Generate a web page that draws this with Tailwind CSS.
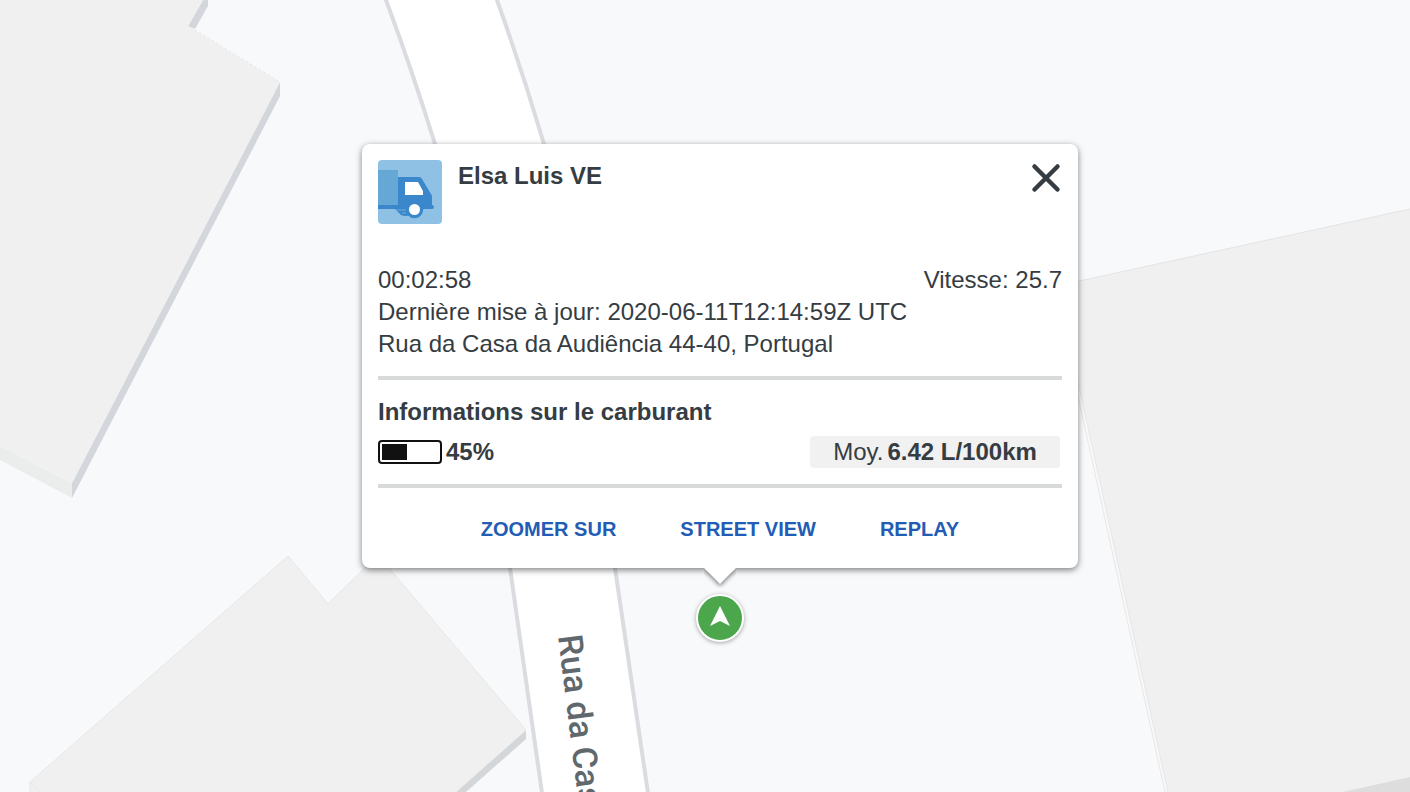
<!DOCTYPE html>
<html lang="fr">
<head>
    <meta charset="UTF-8">
    <meta name="viewport" content="width=device-width, initial-scale=1.0">
    <title>Elsa Luis VE</title>
    <script src="https://cdn.jsdelivr.net/npm/@tailwindcss/browser@4"></script>
    <style>
        body {
            font-family: 'Liberation Sans', Arial, sans-serif;
        }
    </style>
</head>
<body class="relative min-h-screen overflow-hidden bg-[#f8f9fb] text-[#353c42]">

    <!-- Map -->
    <svg class="absolute inset-0 h-full w-full" viewBox="0 0 1410 792" preserveAspectRatio="xMinYMin slice" aria-hidden="true">
        <!-- Road -->
        <path d="M383 -10L386 0Q412 70 435 144Q492 330 510 568L543 800H649L615 568Q596 330 544 144Q522 70 497 0L494 -10Z" fill="#fff" stroke="#dbdce0" stroke-width="4"/>

        <!-- Top left building -->
        <path d="M203 0H208V6L195 29L188 26Z" fill="#d3d6da"/>
        <path d="M280 82V96L72 498V483Z" fill="#d3d6da"/>
        <path d="M0 446L72 483V498L0 460Z" fill="#ebedec"/>
        <path d="M0 0H203L188 26L280 82L72 483L0 446Z" fill="#f0f0f0"/>
        <path d="M195 30L280 82" stroke="#e3e4e5" stroke-dasharray="2 3"/>

        <!-- Bottom left building -->
        <path d="M526 730V739L466 792H456Z" fill="#d4d7da"/>
        <path d="M288 556L328 604L378 555L526 730L456 792H30V782Z" fill="#f0f0f0"/>
        <path d="M30 792V782L288 556L328 604L378 555L526 730M30 782L39 792" fill="none" stroke="#e6e7e7"/>

        <!-- Right building -->
        <path d="M1070 283L1410 209V792H1167L1078 382Z" fill="#f0f0f0"/>
        <path d="M1070 283L1410 209" stroke="#e4e4e4"/>
        <path d="M1078 382L1168 792H1165L1078 396Z" fill="#faf9f9" stroke="#e8e6e6"/>
        <path d="M1343 792L1410 777V792Z" fill="#dddddd"/>

        <text transform="translate(558 636) rotate(83)" font-family="Roboto, sans-serif" font-size="34" font-weight="500" fill="#5f686c">Rua da Casa da Audiência</text>
    </svg>

    <!-- Vehicle marker -->
    <button type="button" aria-label="Elsa Luis VE" class="absolute left-[696px] top-[594px] flex size-12 items-center justify-center rounded-full border-2 border-white bg-[#4ba64c] shadow-[0_1px_4px_rgba(0,0,0,0.35)]">
        <svg class="size-11 shrink-0" viewBox="0 0 44 44" fill="#fff" aria-hidden="true">
            <path d="M22 10L32 30L22 25L12 30Z"/>
        </svg>
    </button>

    <!-- Info popup -->
    <section class="absolute left-[362px] top-36 w-[716px] rounded-lg bg-white px-4 pt-4 text-2xl leading-8 shadow-[0_2px_6px_rgba(0,0,0,0.5)]">
        <header class="flex items-start">
            <svg class="size-16 shrink-0 rounded" viewBox="0 0 64 64" aria-hidden="true">
                <rect width="64" height="64" fill="#8ec1e3"/>
                <path d="M17 49H34V53C32 56 27 57 23 55Z" fill="#3a87cb"/>
                <path d="M18 50H28M24 53H28" stroke="#6eaedc"/>
                <path d="M20 17H41Q43 17 44 19L53 34Q54 35 54 37V45Q56 45 56 47Q56 49 54 49H0V45H20Z" fill="#3a87cb"/>
                <rect y="10" width="20" height="35" fill="#65a8d6"/>
                <path d="M27 22H40L45 31V35H27Z" fill="#fff"/>
                <circle cx="36.5" cy="49.5" r="8.7" fill="#3a87cb"/>
                <circle cx="36.5" cy="49.5" r="5.5" fill="#fff"/>
            </svg>
            <h1 class="ml-4 flex-1 font-bold">Elsa Luis VE</h1>
            <button type="button" aria-label="Fermer" class="mt-0.5 cursor-pointer">
                <svg class="size-8" viewBox="0 0 32 32" fill="none" stroke="#353c42" stroke-width="4.5" stroke-linecap="round" aria-hidden="true">
                    <path d="M4.5 4.5L27.5 27.5M27.5 4.5L4.5 27.5"/>
                </svg>
            </button>
        </header>

        <div class="mt-10">
            <div class="flex justify-between">
                <span>00:02:58</span>
                <span>Vitesse: 25.7</span>
            </div>
            <p>Dernière mise à jour: 2020-06-11T12:14:59Z UTC</p>
            <p>Rua da Casa da Audiência 44-40, Portugal</p>
        </div>

        <!-- Fuel -->
        <div class="mt-4 border-y-4 border-[#d8dad9] py-4">
            <h2 class="font-bold">Informations sur le carburant</h2>
            <div class="mt-2 flex items-center justify-between pr-0.5">
                <div class="flex items-center gap-1">
                    <div class="h-6 w-16 rounded-[4px] border-2 border-[#111] p-0.5">
                        <div class="h-full bg-[#111]" style="width: 45%"></div>
                    </div>
                    <strong>45%</strong>
                </div>
                <div class="flex w-[250px] justify-center gap-1 rounded bg-[#f1f1f1]">
                    <span>Moy.</span>
                    <strong>6.42 L/100km</strong>
                </div>
            </div>
        </div>

        <div class="flex h-20 items-center justify-center gap-16 pt-0.5 text-xl font-bold text-[#225cb5]">
            <button type="button" class="cursor-pointer uppercase">Zoomer sur</button>
            <button type="button" class="cursor-pointer uppercase">Street view</button>
            <button type="button" class="cursor-pointer uppercase">Replay</button>
        </div>

        <!-- Popup tail -->
        <svg class="absolute left-1/2 top-full h-5 w-8 -translate-x-1/2" viewBox="0 0 32 20" aria-hidden="true">
            <path class="drop-shadow-[0_2px_2px_rgba(0,0,0,0.5)]" d="M0 0H32L16 16Z" fill="#fff"/>
        </svg>
    </section>

</body>
</html>
